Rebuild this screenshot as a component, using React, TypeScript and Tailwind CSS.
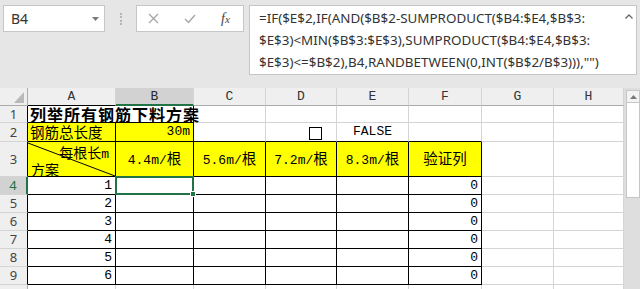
import React from "react";

const CJK = /([\u4e00-\u9fff]+)/;

function Mixed({ s, cjk = "text-[14.5px]" }: { s: string; cjk?: string }) {
  const parts = s.split(CJK).filter((p) => p.length > 0);
  return (
    <span className="leading-none whitespace-nowrap">
      {parts.map((p, i) =>
        /[\u4e00-\u9fff]/.test(p) ? (
          <span key={i} className={"font-['Noto_Sans_CJK_SC',sans-serif] " + cjk}>
            {p}
          </span>
        ) : (
          <span key={i}>{p}</span>
        )
      )}
    </span>
  );
}

const G = "border-r border-b border-[#d4d4d4]";
const K = "border-r border-b border-black";
const Y = "bg-[#ffff00]";
const MONO = "font-['Liberation_Mono',monospace] text-[13px] leading-none";

function RowHead({ n, sel = false, black = true }: { n: number; sel?: boolean; black?: boolean }) {
  return (
    <div
      className={
        "flex items-center justify-center border-b border-b-[#d4d4d4] font-['Noto_Sans',sans-serif] text-[13px] leading-none " +
        (sel
          ? "bg-[#d2d2d2] border-r-2 border-r-[#217346] text-[#217346]"
          : black
          ? "bg-[#efefef] border-r border-r-black text-[#444]"
          : "bg-[#efefef] border-r border-r-[#ababab] text-[#444]")
      }
    >
      {n}
    </div>
  );
}

function ColHead({ l, sel = false, bottomBlack = false }: { l: string; sel?: boolean; bottomBlack?: boolean }) {
  return (
    <div
      className={
        "flex items-center justify-center font-['Liberation_Mono',monospace] text-[13px] leading-none border-r border-r-[#d4d4d4] " +
        (sel
          ? "bg-[#d2d2d2] border-b-2 border-b-[#217346] text-[#262626]"
          : bottomBlack
          ? "bg-[#efefef] border-b border-b-black text-[#333]"
          : "bg-[#efefef] border-b border-b-[#ababab] text-[#333]")
      }
    >
      {l}
    </div>
  );
}

function DataRow({ n, idx }: { n: number; idx: number }) {
  const sel = idx === 1;
  return (
    <>
      <RowHead n={n} sel={sel} />
      <div className={K + " flex items-end justify-end pr-[3px] pb-[2px] " + MONO}>{idx}</div>
      <div className={K + " relative"}>
        {sel && (
          <div className="absolute -left-[1px] -top-[1px] right-[-1px] bottom-[-1px] border-2 border-[#217346] z-10">
            <div className="absolute -right-[4px] -bottom-[4px] w-[6px] h-[6px] bg-[#217346] border border-white" />
          </div>
        )}
      </div>
      <div className={K} />
      <div className={K} />
      <div className={K} />
      <div className={K + " flex items-end justify-end pr-[3px] pb-[2px] " + MONO}>0</div>
      <div className={G} />
      <div className={G} />
    </>
  );
}

export default function App() {
  return (
    <div className="w-[640px] h-[289px] overflow-hidden bg-white font-['Noto_Sans',sans-serif]">
      {/* Formula bar area */}
      <div className="h-[88px] bg-[#e6e6e6] flex items-start pt-[5px] pl-[3px]">
        <div className="w-[102px] h-[27px] bg-white border border-[#c6c6c6] flex items-center justify-between pl-[7px] pr-[5px]">
          <span className="text-[14px] text-[#333] leading-none">B4</span>
          <svg width="7" height="4" viewBox="0 0 7 4">
            <polygon points="0,0 7,0 3.5,4" fill="#7a7a7a" />
          </svg>
        </div>
        <div className="ml-[15px] mt-[8px] h-[12px] w-0 border-l-2 border-dotted border-[#b5b5b5]" />
        <div className="ml-[14px] w-[108px] h-[27px] bg-white border border-[#c6c6c6] flex items-center">
          <svg className="ml-[11px]" width="11" height="11" viewBox="0 0 11 11">
            <path d="M1 1 L10 10 M10 1 L1 10" stroke="#a6a6a6" strokeWidth="1.3" />
          </svg>
          <svg className="ml-[25px]" width="12" height="10" viewBox="0 0 12 10">
            <path d="M1 5 L4.5 8.5 L11 1" stroke="#a6a6a6" strokeWidth="1.4" fill="none" />
          </svg>
          <span className="ml-[25px] font-['Liberation_Serif',serif] italic text-[14px] text-[#444] leading-none">
            f<span className="text-[11px]">x</span>
          </span>
        </div>
        <div className="ml-[5px] w-[388px] h-[70px] bg-white border border-[#c6c6c6] flex">
          <div className="flex-1 pl-[9px] pt-[1px] text-[13.4px] leading-[22px] text-[#333] whitespace-nowrap">
            <div>=IF($E$2,IF(AND($B$2-SUMPRODUCT($B4:$E4,$B$3:</div>
            <div>$E$3)&lt;MIN($B$3:$E$3),SUMPRODUCT($B4:$E4,$B$3:</div>
            <div>$E$3)&lt;=$B$2),B4,RANDBETWEEN(0,INT($B$2/B$3))),"")</div>
          </div>
          <div className="w-[14px] pt-[8px] flex justify-center">
            <svg width="8" height="5" viewBox="0 0 8 5">
              <path d="M0.5 4.5 L4 1 L7.5 4.5" stroke="#666" strokeWidth="1.3" fill="none" />
            </svg>
          </div>
        </div>
      </div>

      {/* Sheet */}
      <div className="flex">
        <div className="w-[624px] grid grid-cols-[28px_88px_78px_72px_71px_72px_73px_72px_70px] grid-rows-[18px_17px_19px_35px_18px_18px_18px_18px_18px_18px_18px] bg-white">
          {/* header row */}
          <div className="bg-[#efefef] border-r border-b border-[#ababab] flex items-end justify-end pr-[3px] pb-[2px]">
            <svg width="10" height="11" viewBox="0 0 10 11">
              <polygon points="10,0 10,11 0,11" fill="#b9b9b9" />
            </svg>
          </div>
          <ColHead l="A" bottomBlack />
          <ColHead l="B" sel />
          <ColHead l="C" />
          <ColHead l="D" />
          <ColHead l="E" />
          <ColHead l="F" />
          <ColHead l="G" />
          <ColHead l="H" />

          {/* row 1 */}
          <RowHead n={1} />
          <div className={K + " col-span-2 flex items-end pl-[2px] overflow-visible relative z-10"}>
            <span className="font-['Noto_Sans_CJK_SC',sans-serif] font-bold text-[16px] leading-none tracking-[1px] whitespace-nowrap text-black">
              列举所有钢筋下料方案
            </span>
          </div>
          <div className={G} />
          <div className={G} />
          <div className={G} />
          <div className={G} />
          <div className={G} />
          <div className={G} />

          {/* row 2 */}
          <RowHead n={2} />
          <div className={K + " " + Y + " flex items-end pl-[2px] pb-[1px] leading-none"}>
            <Mixed s="钢筋总长度" cjk="text-[14.5px] leading-none" />
          </div>
          <div className={K + " " + Y + " flex items-end justify-end pr-[3px] pb-[3px] " + MONO}>30m</div>
          <div className="border-r border-r-[#d4d4d4] border-b border-b-black" />
          <div className="border-r border-r-[#d4d4d4] border-b border-b-black flex items-end justify-end pr-[14px] pb-[1px]">
            <div className="w-[13px] h-[13px] border border-black bg-white" />
          </div>
          <div className={"border-r border-r-[#d4d4d4] border-b border-b-black flex items-end justify-center pb-[3px] " + MONO}>
            FALSE
          </div>
          <div className="border-r border-r-[#d4d4d4] border-b border-b-black" />
          <div className={G} />
          <div className={G} />

          {/* row 3 */}
          <RowHead n={3} />
          <div className={K + " " + Y + " relative flex flex-col justify-between pt-[3px]"}>
            <svg className="absolute inset-0" width="87" height="34" viewBox="0 0 87 34">
              <line x1="0" y1="1" x2="87" y2="34" stroke="#000" strokeWidth="1" />
            </svg>
            <div className={"flex justify-end pr-[6px] " + MONO}>
              <Mixed s="每根长m" cjk="text-[14px] leading-none" />
            </div>
            <div className="flex justify-start pl-[3px] leading-none">
              <Mixed s="方案" cjk="text-[14px] leading-none" />
            </div>
          </div>
          {["4.4m/根", "5.6m/根", "7.2m/根", "8.3m/根", "验证列"].map((t) => (
            <div key={t} className={K + " " + Y + " flex items-center justify-center " + MONO}>
              <Mixed s={t} cjk="text-[14.5px] leading-none" />
            </div>
          ))}
          <div className={G} />
          <div className={G} />

          {/* rows 4-9 */}
          {[1, 2, 3, 4, 5, 6].map((i) => (
            <DataRow key={i} n={i + 3} idx={i} />
          ))}

          {/* row 10 */}
          <RowHead n={10} black={false} />
          <div className={G} />
          <div className={G} />
          <div className={G} />
          <div className={G} />
          <div className={G} />
          <div className={G} />
          <div className={G} />
          <div className={G} />
        </div>

        {/* vertical scrollbar */}
        <div className="w-[16px] h-[201px] bg-[#dedede] pl-[2px] pt-[2px] flex flex-col">
          <div className="h-[13px] bg-[#f3f3f3] border border-[#c6c6c6] flex items-center justify-center">
            <svg width="7" height="4" viewBox="0 0 7 4">
              <polygon points="0,4 7,4 3.5,0" fill="#7a7a7a" />
            </svg>
          </div>
          <div className="h-[95px] bg-white border border-t-0 border-[#c6c6c6]" />
        </div>
      </div>
    </div>
  );
}
